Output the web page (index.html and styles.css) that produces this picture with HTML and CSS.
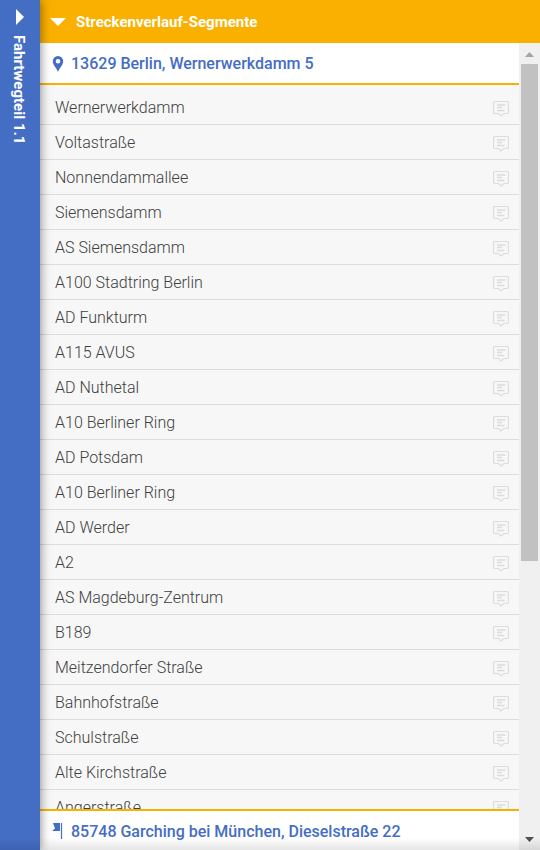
FILE: index.html
```
<!DOCTYPE html>
<html lang="de">
<head>
    <meta charset="UTF-8">
    <title>Streckenverlauf-Segmente</title>
    <link rel="stylesheet" href="styles.css">
</head>
<body>
    <svg class="symbols" aria-hidden="true">
        <symbol id="note" viewBox="0 0 16 17">
            <path d="M2 1.500H14Q15.500 1.500 15.500 3V12Q15.500 13.500 14 13.500H11L8 16L5.500 13.500H2Q.5 13.500 .5 12V3Q.5 1.500 2 1.500Z" fill="none" stroke="#dcdcdc" stroke-width="1.200"/>
            <path d="M4 5H12.500M4 7.500H9M4 10.500H11.500" fill="none" stroke="#dcdcdc" stroke-width="1.400"/>
        </symbol>
    </svg>
    <button class="side" type="button">
        <svg class="arrowRight" viewBox="0 0 8 16"><path d="M0 0L8 8L0 16Z" fill="#fff"/></svg>
        <span class="sideText">Fahrtwegteil 1.1</span>
    </button>
    <main class="panel">
        <button class="panelHead" type="button">
            <svg class="arrowDown" viewBox="0 0 16 8"><path d="M0 0H16L8 8Z" fill="#fff"/></svg>
            <span>Streckenverlauf-Segmente</span>
        </button>
        <div class="panelBody">
            <div class="route">
                <div class="place start">
                    <svg class="placeIcon" viewBox="0 0 12 17"><path fill-rule="evenodd" d="M6 0A5.200 5.200 0 0 0 .8 5.200C.8 9 4.500 11.500 6 16C7.500 11.500 11.200 9 11.200 5.200A5.200 5.200 0 0 0 6 0ZM6 2.900A2.300 2.300 0 1 1 6 7.500A2.300 2.300 0 0 1 6 2.900Z" fill="#446dc4"/></svg>
                    <span>13629 Berlin, Wernerwerkdamm 5</span>
                </div>
                <ul class="segments">
                    <li><span>Wernerwerkdamm</span><svg class="note"><use href="#note"/></svg></li>
                    <li><span>Voltastraße</span><svg class="note"><use href="#note"/></svg></li>
                    <li><span>Nonnendammallee</span><svg class="note"><use href="#note"/></svg></li>
                    <li><span>Siemensdamm</span><svg class="note"><use href="#note"/></svg></li>
                    <li><span>AS Siemensdamm</span><svg class="note"><use href="#note"/></svg></li>
                    <li><span>A100 Stadtring Berlin</span><svg class="note"><use href="#note"/></svg></li>
                    <li><span>AD Funkturm</span><svg class="note"><use href="#note"/></svg></li>
                    <li><span>A115 AVUS</span><svg class="note"><use href="#note"/></svg></li>
                    <li><span>AD Nuthetal</span><svg class="note"><use href="#note"/></svg></li>
                    <li><span>A10 Berliner Ring</span><svg class="note"><use href="#note"/></svg></li>
                    <li><span>AD Potsdam</span><svg class="note"><use href="#note"/></svg></li>
                    <li><span>A10 Berliner Ring</span><svg class="note"><use href="#note"/></svg></li>
                    <li><span>AD Werder</span><svg class="note"><use href="#note"/></svg></li>
                    <li><span>A2</span><svg class="note"><use href="#note"/></svg></li>
                    <li><span>AS Magdeburg-Zentrum</span><svg class="note"><use href="#note"/></svg></li>
                    <li><span>B189</span><svg class="note"><use href="#note"/></svg></li>
                    <li><span>Meitzendorfer Straße</span><svg class="note"><use href="#note"/></svg></li>
                    <li><span>Bahnhofstraße</span><svg class="note"><use href="#note"/></svg></li>
                    <li><span>Schulstraße</span><svg class="note"><use href="#note"/></svg></li>
                    <li><span>Alte Kirchstraße</span><svg class="note"><use href="#note"/></svg></li>
                    <li><span>Angerstraße</span><svg class="note"><use href="#note"/></svg></li>
                </ul>
                <div class="place end">
                    <svg class="placeIcon" viewBox="0 0 12 17"><path d="M1 0H8V8H0L3 5.500Z" fill="#446dc4"/><path d="M9.500 0V16" stroke="#446dc4" stroke-width="1.200"/></svg>
                    <span>85748 Garching bei München, Dieselstraße 22</span>
                </div>
            </div>
            <div class="scroll">
                <svg class="scrollArrow" viewBox="0 0 21 21"><path d="M6 14L10.500 9L15 14Z" fill="#a3a3a3"/></svg>
                <div class="track"><div class="thumb"></div></div>
                <svg class="scrollArrow" viewBox="0 0 21 21"><path d="M6 8H15L10.500 13Z" fill="#505050"/></svg>
            </div>
        </div>
    </main>
</body>
</html>
```
FILE: styles.css
```
* { margin: 0; padding: 0; box-sizing: border-box; }

body {
    display: flex; height: 100vh; overflow: hidden;
    position: relative;
    font: 300 16px/24px Roboto, sans-serif;
    background-color: #f7f7f7; color: #404040;
}
/* shade along the bottom edge */
body::after {
    content: ""; position: absolute; left: 0; right: 0; bottom: 0;
    height: 12px; z-index: 2; pointer-events: none;
    background: linear-gradient(rgba(0, 0, 0, 0), rgba(0, 0, 0, .1));
}
button { border: 0; font: inherit; cursor: pointer; }
svg { display: block; flex: none; }
.symbols { position: absolute; width: 0; height: 0; }

/* left bar */
.side {
    display: flex; flex-direction: column; align-items: center; gap: 10px;
    flex: none; width: 40px; padding-top: 9px;
    background-color: #446dc4; color: #fff;
    box-shadow: 0 0 10px rgba(0, 0, 0, .5);
    z-index: 1;
}
.arrowRight { width: 8px; height: 16px; }
.sideText { writing-mode: vertical-rl; padding-right: 2px; font-weight: bold; font-size: 15px; }

/* panel */
.panel { display: flex; flex-direction: column; flex: 1; min-width: 0; }
.panelHead {
    display: flex; align-items: center; gap: 10px;
    flex: none; height: 43px; padding: 0 10px;
    background-color: #fab000; color: #fff;
    font-weight: bold; font-size: 15px;
}
.arrowDown { width: 16px; height: 8px; }
.panelBody { display: flex; flex: 1; min-height: 0; }
.route { display: flex; flex-direction: column; flex: 1; min-width: 0; }

.place {
    display: flex; align-items: center; gap: 7px;
    flex: none; padding: 2px 12px 0;
    background-color: #fff; color: #446dc4;
    font-weight: 500;
}
.start { height: 42px; border-bottom: 2px solid #fab000; }
.end { height: 41px; border-top: 2px solid #fab000; }
.placeIcon { width: 12px; height: 17px; }

/* segments */
.segments { flex: 1; min-height: 0; overflow: hidden; padding-top: 5px; list-style: none; }
.segments li {
    display: flex; align-items: center; justify-content: space-between;
    height: 35px; padding: 2px 10px 0 15px;
    border-bottom: 1px solid #dcdcdc;
}
.note { width: 16px; height: 17px; }

/* scrollbar */
.scroll { display: flex; flex-direction: column; flex: none; width: 21px; background-color: #f0f0f0; }
.scrollArrow { width: 21px; height: 21px; }
.track { flex: 1; padding: 0 2px; }
.thumb { height: 65%; background-color: #c1c1c1; }
```
